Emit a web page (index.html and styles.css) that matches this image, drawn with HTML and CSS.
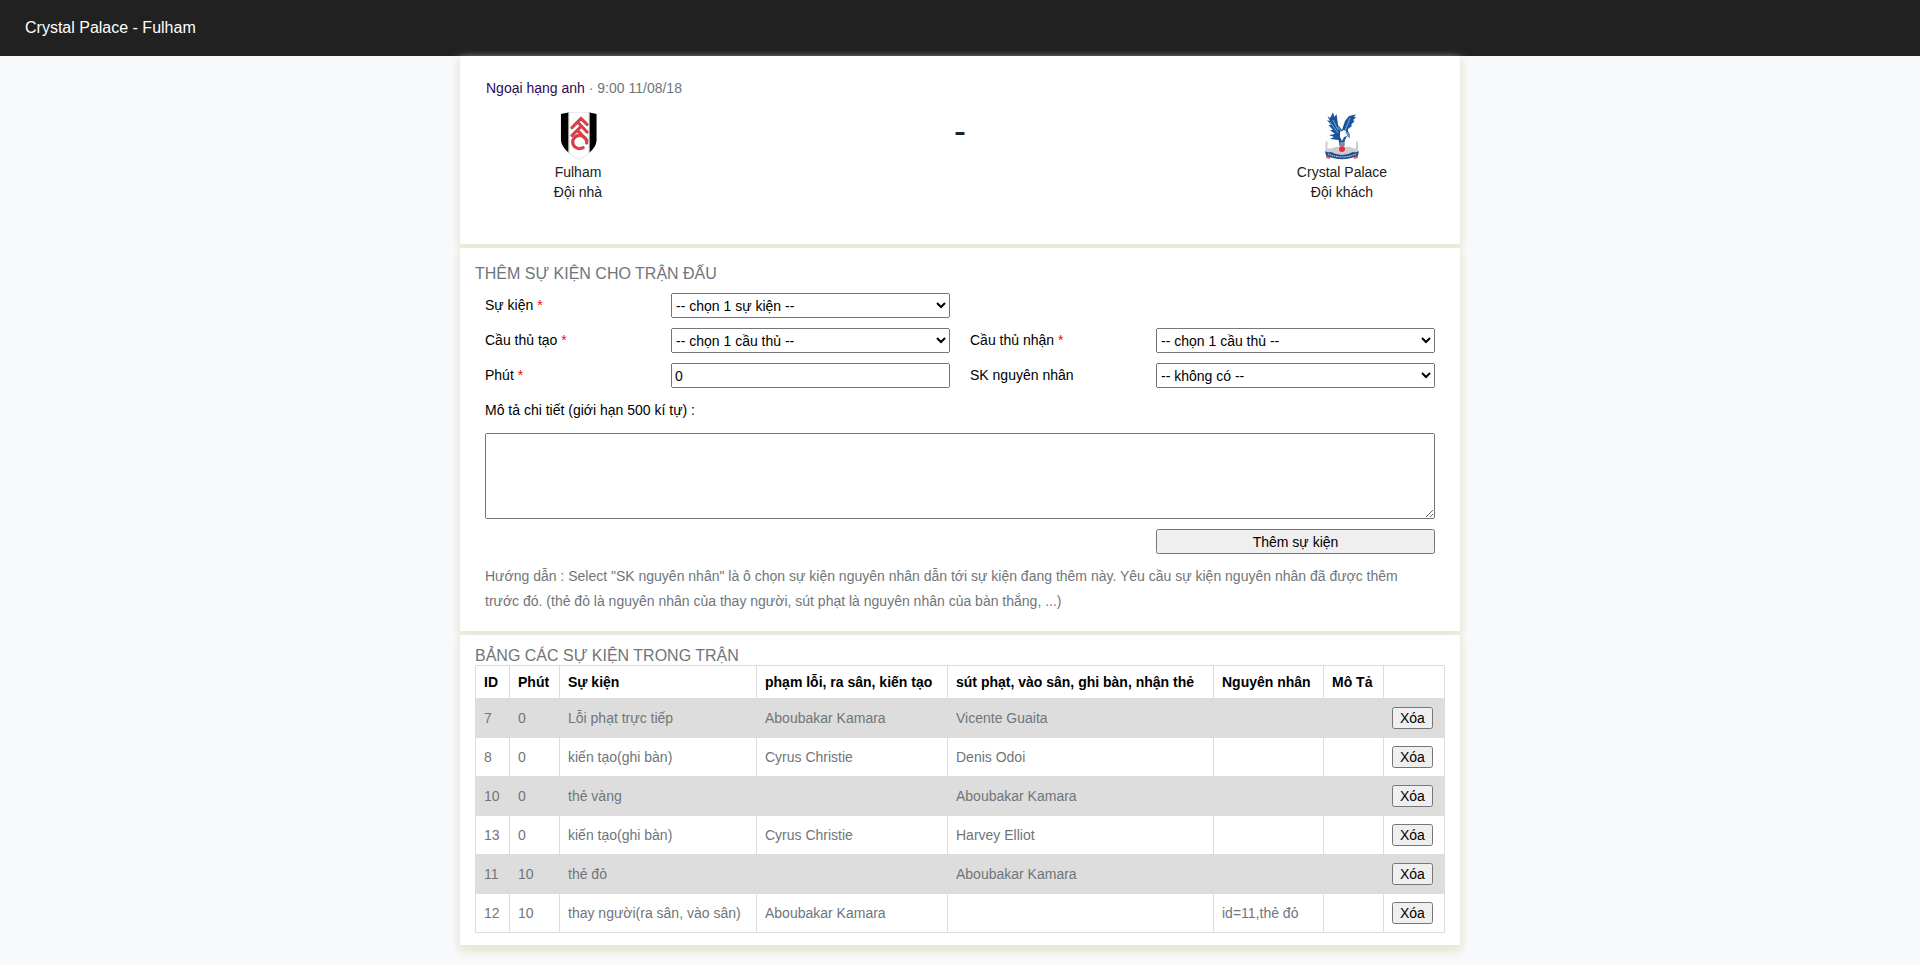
FILE: index.html
```html
<!DOCTYPE html>
<html lang="vi">
<head>
<meta charset="utf-8">
<title>Crystal Palace - Fulham</title>
<link rel="stylesheet" href="styles.css">
</head>
<body>
<header class="topbar">Crystal Palace - Fulham</header>
<main class="page">
  <section class="card match">
    <div class="match-info"><a class="league">Ngoại hạng anh</a> · 9:00 11/08/18</div>
    <div class="scoreboard">
      <div class="team">
        <svg class="crest" width="48" height="48" viewBox="0 0 48 48">
          <path d="M7 2Q25-2 42.500 2V28Q40 40 25 47.500Q9 40 7 28Z" fill="#fff" stroke="#ddd" stroke-width=".8"/>
          <path d="M7 2L14.500 .5V40.500Q8 35 7 29Z" fill="#000"/>
          <path d="M42.500 2L35.500 .5V40.500Q42 35 42.500 29Z" fill="#000"/>
          <path d="M14.800 .5V40.500M35.200 .5V40.500" stroke="#aaa" stroke-width=".8"/>
          <g fill="none" stroke="#8a6a6c" stroke-width="3.100" stroke-linecap="round">
            <path d="M18 15.700L27 6.500L33 12.300M18 23.500L27 14.500M24 10.500L33 20M23.500 18.500L28 23"/>
            <path d="M32.600 31A7 6.600 0 1 0 29.200 35.700"/>
            <path d="M29 24.500L33 28.500"/>
          </g>
          <g fill="none" stroke="#e63a46" stroke-width="2.500" stroke-linecap="round">
            <path d="M18 15.700L27 6.500L33 12.300M18 23.500L27 14.500M24 10.500L33 20M23.500 18.500L28 23"/>
            <path d="M32.600 31A7 6.600 0 1 0 29.200 35.700"/>
          </g>
        </svg>
        <span>Fulham</span>
        <span>Đội nhà</span>
      </div>
      <div class="score">-</div>
      <div class="team">
        <svg class="crest" width="48" height="48" viewBox="0 0 48 48">
          <path d="M7.500 29.500h2v7h4l5-2 6 1 6-1 5 2h2.500v-7h2v11l-16 4L7.500 41Z" fill="#ccc"/>
          <path d="M9.500 4L12 6L15 .5L16.500 5L18.500 2L19.500 9L20 13L24 18L27 9L31 4L38 2.500L36 5L38 5.500L35 8L36.500 9L33 13L34 14L30 17L30 19L32 23V26L29 24L27 28L26 33H21.500L20.500 28L12 27L16 25L11 23L17 22L12 18L15 18L10.500 13L13 13L9 8L12 9Z" fill="#17549b"/>
          <path d="M15 8l5 10M12 10l8 11M32 6l-5 13M20 15l4 6" stroke="#9bbbdc" stroke-width=".8" fill="none"/>
          <path d="M22 20L26 18L30 21L29 24L26 25L24 29L22 25Z" fill="#fff"/>
          <path d="M27 20l3 0 2 3v3l-3-3Z" fill="#6c96bc"/>
          <path d="M22 30h4l1 4h-6Z" fill="#6a91bb"/>
          <circle cx="24" cy="37" r="3" fill="#dc3048"/>
          <path d="M8 42l4 1v4l-4-1ZM40 42l-4 1v4l4-1Z" fill="#df6679"/>
          <path d="M7 39Q9 41 13 40Q24 46 35 40Q38 41 41 39L40 43.500Q24 51 8 43.500Z" fill="#244d91"/>
          <path d="M10 42Q24 48 38 42" stroke="#c5d0e5" stroke-width="1.200" stroke-dasharray="1.300 .8" fill="none"/>
        </svg>
        <span>Crystal Palace</span>
        <span>Đội khách</span>
      </div>
    </div>
  </section>

  <section class="card add-event">
    <h2 class="title">THÊM SỰ KIỆN CHO TRẬN ĐẤU</h2>
    <form class="form">
      <div class="row">
        <label class="label">Sự kiện <span class="req">*</span></label>
        <select class="field"><option>-- chọn 1 sự kiện --</option></select>
      </div>
      <div class="row"></div>
      <div class="row">
        <label class="label">Cầu thủ tạo <span class="req">*</span></label>
        <select class="field"><option>-- chọn 1 cầu thủ --</option></select>
      </div>
      <div class="row">
        <label class="label">Cầu thủ nhận <span class="req">*</span></label>
        <select class="field"><option>-- chọn 1 cầu thủ --</option></select>
      </div>
      <div class="row">
        <label class="label">Phút <span class="req">*</span></label>
        <input class="field" type="text" value="0">
      </div>
      <div class="row">
        <label class="label">SK nguyên nhân</label>
        <select class="field"><option>-- không có --</option></select>
      </div>
      <label class="label wide">Mô tả chi tiết (giới hạn 500 kí tự) :</label>
      <textarea class="detail wide"></textarea>
      <div class="row submit-row"><button class="field submit" type="button">Thêm sự kiện</button></div>
      <p class="hint wide">Hướng dẫn : Select "SK nguyên nhân" là ô chọn sự kiện nguyên nhân dẫn tới sự kiện đang thêm này. Yêu cầu sự kiện nguyên nhân đã được thêm trước đó. (thẻ đỏ là nguyên nhân của thay người, sút phạt là nguyên nhân của bàn thắng, ...)</p>
    </form>
  </section>

  <section class="card events">
    <h2 class="title">BẢNG CÁC SỰ KIỆN TRONG TRẬN</h2>
    <table class="table">
      <colgroup><col class="c-id"><col class="c-min"><col class="c-event"><col class="c-from"><col class="c-to"><col class="c-cause"><col class="c-desc"><col class="c-action"></colgroup>
      <thead>
        <tr><th>ID</th><th>Phút</th><th>Sự kiện</th><th>phạm lỗi, ra sân, kiến tạo</th><th>sút phạt, vào sân, ghi bàn, nhận thẻ</th><th>Nguyên nhân</th><th>Mô Tả</th><th></th></tr>
      </thead>
      <tbody>
        <tr><td>7</td><td>0</td><td>Lỗi phạt trực tiếp</td><td>Aboubakar Kamara</td><td>Vicente Guaita</td><td></td><td></td><td><button class="delete">Xóa</button></td></tr>
        <tr><td>8</td><td>0</td><td>kiến tạo(ghi bàn)</td><td>Cyrus Christie</td><td>Denis Odoi</td><td></td><td></td><td><button class="delete">Xóa</button></td></tr>
        <tr><td>10</td><td>0</td><td>thẻ vàng</td><td></td><td>Aboubakar Kamara</td><td></td><td></td><td><button class="delete">Xóa</button></td></tr>
        <tr><td>13</td><td>0</td><td>kiến tạo(ghi bàn)</td><td>Cyrus Christie</td><td>Harvey Elliot</td><td></td><td></td><td><button class="delete">Xóa</button></td></tr>
        <tr><td>11</td><td>10</td><td>thẻ đỏ</td><td></td><td>Aboubakar Kamara</td><td></td><td></td><td><button class="delete">Xóa</button></td></tr>
        <tr><td>12</td><td>10</td><td>thay người(ra sân, vào sân)</td><td>Aboubakar Kamara</td><td></td><td>id=11,thẻ đỏ</td><td></td><td><button class="delete">Xóa</button></td></tr>
      </tbody>
    </table>
  </section>
</main>
</body>
</html>
```
FILE: styles.css
```css
* { box-sizing: border-box; }
body {
  margin: 0;
  min-height: 100vh;
  background: #f8f9fb;
  color: #70757a;
  font: 14px/20px "Liberation Sans", Arial, sans-serif;
}
.topbar {
  height: 56px;
  padding: 0 25px;
  background: #212121;
  color: #fff;
  font-size: 16px;
  line-height: 56px;
}
.page {
  width: 1000px;
  margin: 0 auto;
  display: flex;
  flex-direction: column;
  gap: 4px;
}
.card {
  background: #fff;
  box-shadow: 0 5px 8px #e6e8d6, 0 5px 10px #e6e8d6;
}
.match { height: 188px; padding: 22px 26px; }
.league { color: #2b0a57; }
.scoreboard {
  display: flex;
  justify-content: space-between;
  margin-top: 14px;
  color: #212121;
}
.team {
  width: 184px;
  display: flex;
  flex-direction: column;
  align-items: center;
}
.crest { display: block; margin-bottom: 2px; }
.score { font-size: 36px; line-height: 38px; }
.title {
  margin: 0;
  font-size: 16px;
  font-weight: 400;
  line-height: 20px;
}
.add-event { height: 383px; padding: 16px 15px 15px; }
.form {
  display: grid;
  grid-template-columns: 465px 465px;
  gap: 10px 20px;
  margin: 9px 10px 0;
}
.row { display: grid; grid-template-columns: 40% 60%; height: 25px; }
.wide { grid-column: 1 / -1; }
.label { color: #000; line-height: 25px; }
.req { color: #f00; }
.field {
  width: 100%;
  height: 25px;
  font: 14px "Liberation Sans", Arial, sans-serif;
}
.detail { display: block; width: 100%; height: 86px; }
.submit-row { grid-column: 2; }
.submit { grid-column: 2; }
.hint { margin: 0; line-height: 25px; }
.events { height: 310px; padding: 11px 15px 10px; }
.events .title { line-height: 19px; }
.table {
  width: 969px;
  table-layout: fixed;
  border-collapse: collapse;
}
.c-id { width: 34px; }
.c-min { width: 50px; }
.c-event { width: 197px; }
.c-from { width: 191px; }
.c-to { width: 266px; }
.c-cause { width: 110px; }
.c-desc { width: 60px; }
.c-action { width: 61px; }
.table th, .table td {
  border: 1px solid #ddd;
  padding: 8px;
  text-align: left;
  line-height: 16px;
  white-space: nowrap;
}
.table th { color: #000; }
.table tbody tr:nth-child(odd) { background: #ddd; }
.delete {
  display: block;
  height: 22px;
  padding: 1px 6px;
  font: 14px "Liberation Sans", Arial, sans-serif;
}
```
